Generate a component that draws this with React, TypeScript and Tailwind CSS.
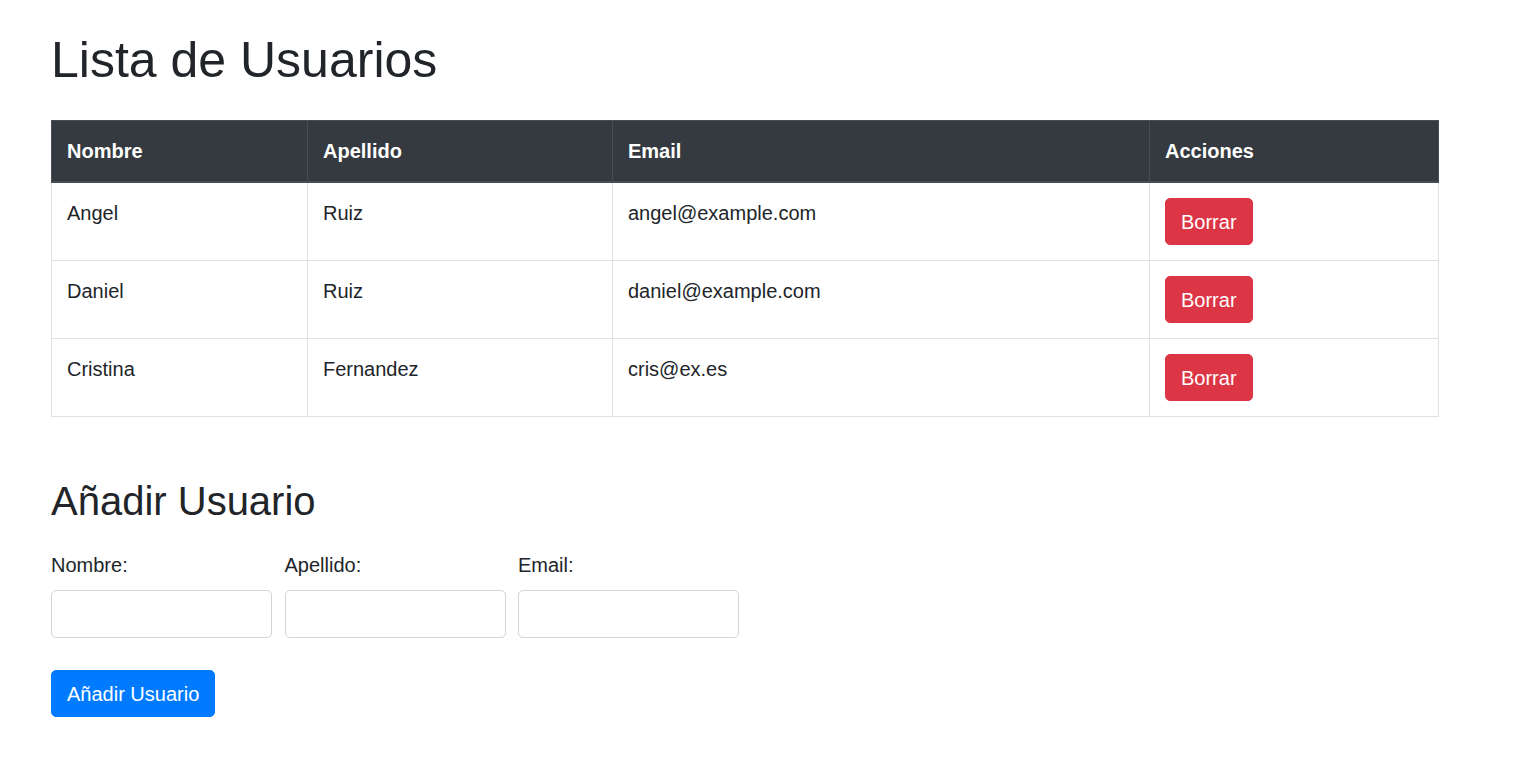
import React from "react";

type Usuario = { nombre: string; apellido: string; email: string };

const usuarios: Usuario[] = [
  { nombre: "Angel", apellido: "Ruiz", email: "angel@example.com" },
  { nombre: "Daniel", apellido: "Ruiz", email: "daniel@example.com" },
  { nombre: "Cristina", apellido: "Fernandez", email: "cris@ex.es" },
];

export default function App() {
  return (
    <div
      className="min-h-screen bg-white text-[#212529] px-[51px] pt-[30px]"
      style={{ fontFamily: '"Liberation Sans", Arial, sans-serif' }}
    >
      {/* Lista */}
      <h1 className="text-[50px] leading-[60px] font-normal mb-[30px]">Lista de Usuarios</h1>

      <table className="w-[1387px] table-fixed border-collapse text-[20px] leading-[30px]">
        <colgroup>
          <col className="w-[256px]" />
          <col className="w-[305px]" />
          <col className="w-[537px]" />
          <col className="w-[289px]" />
        </colgroup>
        <thead>
          <tr className="bg-[#343a40] text-white">
            <th className="text-left font-bold px-[15px] py-[15px] border border-[#454d55] border-b-2">Nombre</th>
            <th className="text-left font-bold px-[15px] py-[15px] border border-[#454d55] border-b-2">Apellido</th>
            <th className="text-left font-bold px-[15px] py-[15px] border border-[#454d55] border-b-2">Email</th>
            <th className="text-left font-bold px-[15px] py-[15px] border border-[#454d55] border-b-2">Acciones</th>
          </tr>
        </thead>
        <tbody>
          {usuarios.map((u) => (
            <tr key={u.email}>
              <td className="align-top px-[15px] py-[15px] border border-[#dee2e6]">{u.nombre}</td>
              <td className="align-top px-[15px] py-[15px] border border-[#dee2e6]">{u.apellido}</td>
              <td className="align-top px-[15px] py-[15px] border border-[#dee2e6]">{u.email}</td>
              <td className="align-top px-[15px] py-[15px] border border-[#dee2e6]">
                <button className="h-[47px] px-[15px] rounded-[5px] bg-[#dc3545] text-white text-[20px] leading-[30px] border border-[#dc3545]">
                  Borrar
                </button>
              </td>
            </tr>
          ))}
        </tbody>
      </table>

      {/* Formulario */}
      <h2 className="text-[40px] leading-[48px] font-normal mt-[60px] mb-[25px]">Añadir Usuario</h2>

      <form className="text-[20px] leading-[30px]" onSubmit={(e) => e.preventDefault()}>
        <div className="flex gap-[12.5px]">
          <div className="w-[221px] flex flex-col">
            <label className="mb-[10px]">Nombre:</label>
            <input type="text" className="h-[48px] w-full rounded-[5px] border border-[#ced4da] px-[15px] outline-none" />
          </div>
          <div className="w-[221px] flex flex-col">
            <label className="mb-[10px]">Apellido:</label>
            <input type="text" className="h-[48px] w-full rounded-[5px] border border-[#ced4da] px-[15px] outline-none" />
          </div>
          <div className="w-[221px] flex flex-col">
            <label className="mb-[10px]">Email:</label>
            <input type="email" className="h-[48px] w-full rounded-[5px] border border-[#ced4da] px-[15px] outline-none" />
          </div>
        </div>
        <button
          type="submit"
          className="mt-[32px] h-[47px] px-[15px] rounded-[5px] bg-[#007bff] border border-[#007bff] text-white text-[20px] leading-[30px]"
        >
          Añadir Usuario
        </button>
      </form>
    </div>
  );
}
